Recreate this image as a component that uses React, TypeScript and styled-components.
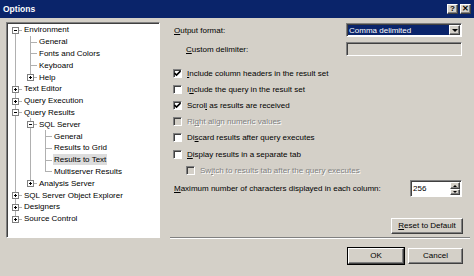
import React, {FC} from 'react';
import styled, {createGlobalStyle, css} from 'styled-components';

const colors = {
    face: '#d4d0c8',
    shadow: '#808080',
    darkShadow: '#404040',
    light: '#ffffff',
    navy: '#0a246a',
    line: '#b0b0b0',
    disabled: '#808080',
};

const GlobalStyle = createGlobalStyle`
  html, body {
    margin: 0;
    padding: 0;
    background: ${colors.face};
  }
  body {
    font-family: "Liberation Sans", Arial, sans-serif;
    font-size: 8px;
    color: #000;
  }
`;

const raised = css`
    border-style: solid;
    border-width: 1px;
    border-color: ${colors.light} ${colors.darkShadow} ${colors.darkShadow} ${colors.light};
    box-shadow: inset -1px -1px 0 ${colors.shadow};
`;

const sunken = css`
    border-style: solid;
    border-width: 1px;
    border-color: ${colors.shadow} ${colors.light} ${colors.light} ${colors.shadow};
    box-shadow: inset 1px 1px 0 ${colors.darkShadow};
`;

const Window = styled.div`
    width: 474px;
    height: 276px;
    display: flex;
    flex-direction: column;
    background: ${colors.face};
    overflow: hidden;
`;

const TitleBar = styled.div`
    height: 18px;
    flex: none;
    display: flex;
    align-items: center;
    justify-content: space-between;
    background: ${colors.navy};
    padding: 0 3px 0 3px;
`;

const Title = styled.span`
    color: #fff;
    font-weight: bold;
    font-size: 8.5px;
`;

const CaptionButtons = styled.div`
    display: flex;
    gap: 2px;
`;

const CaptionButton = styled.div`
    width: 11px;
    height: 10px;
    box-sizing: border-box;
    background: ${colors.face};
    ${raised};
    display: flex;
    align-items: center;
    justify-content: center;
    font-weight: bold;
    font-size: 8px;
    line-height: 1;
`;

const Body = styled.div`
    display: flex;
    padding: 4px 0 0 6px;
    gap: 10px;
`;

const TreeBox = styled.div`
    width: 154px;
    height: 216px;
    box-sizing: border-box;
    background: #fff;
    ${sunken};
    padding: 1px 0 0 1px;
    overflow: hidden;
`;

const TreeRow = styled.div`
    display: flex;
    align-items: center;
    height: 11.8px;
    white-space: nowrap;
`;

const Cell = styled.span<{ $top?: boolean; $bottom?: boolean; $stub?: boolean }>`
    position: relative;
    width: 15px;
    height: 100%;
    flex: none;
    &::before {
        content: '';
        position: absolute;
        left: 7px;
        width: 0;
        border-left: 1px solid ${colors.line};
        top: ${p => (p.$top ? '0' : '50%')};
        bottom: ${p => (p.$bottom ? '0' : '50%')};
        display: ${p => (p.$top || p.$bottom ? 'block' : 'none')};
    }
    &::after {
        content: '';
        position: absolute;
        left: 7px;
        right: 1px;
        top: 50%;
        border-top: 1px solid ${colors.line};
        display: ${p => (p.$stub ? 'block' : 'none')};
    }
`;

const Expander = styled.span`
    position: absolute;
    left: 4px;
    top: 50%;
    margin-top: -3px;
    width: 7px;
    height: 7px;
    box-sizing: border-box;
    border: 1px solid ${colors.shadow};
    background: #fff;
    z-index: 1;
`;

const ExpanderMark = styled.span<{ $plus?: boolean }>`
    position: absolute;
    left: 1px;
    top: 2px;
    width: 3px;
    height: 1px;
    background: #000;
    &::after {
        content: '';
        position: absolute;
        left: 1px;
        top: -1px;
        width: 1px;
        height: 3px;
        background: #000;
        display: ${p => (p.$plus ? 'block' : 'none')};
    }
`;

const NodeLabel = styled.span<{ $selected?: boolean }>`
    padding: 0 1px;
    line-height: 11px;
    background: ${p => (p.$selected ? '#dcdcdc' : 'transparent')};
`;

const RightPane = styled.div`
    width: 300px;
    display: flex;
    flex-direction: column;
`;

const FieldRow = styled.div<{ $indent?: number; $h?: number; $mt?: number }>`
    display: flex;
    align-items: center;
    justify-content: space-between;
    height: ${p => p.$h ?? 16}px;
    margin-top: ${p => p.$mt ?? 0}px;
    padding-left: ${p => p.$indent ?? 4}px;
    padding-right: 8px;
`;

const ComboBox = styled.div`
    width: 116px;
    height: 14px;
    box-sizing: border-box;
    ${sunken};
    background: #fff;
    display: flex;
    padding: 1px;
`;

const ComboValue = styled.div`
    flex: 1;
    background: ${colors.navy};
    color: #fff;
    padding-left: 1px;
    display: flex;
    align-items: center;
`;

const ComboArrow = styled.div`
    width: 11px;
    box-sizing: border-box;
    background: ${colors.face};
    ${raised};
    display: flex;
    align-items: center;
    justify-content: center;
    &::after {
        content: '';
        border-left: 3px solid transparent;
        border-right: 3px solid transparent;
        border-top: 3px solid #000;
    }
`;

const TextBox = styled.div<{ $disabled?: boolean }>`
    width: 116px;
    height: 14px;
    box-sizing: border-box;
    ${sunken};
    background: ${p => (p.$disabled ? colors.face : '#fff')};
`;

const CheckRowWrap = styled.div<{ $indent?: number }>`
    display: flex;
    align-items: center;
    gap: 5px;
    height: 16.2px;
    padding-left: ${p => p.$indent ?? 3}px;
`;

const Box = styled.span<{ $disabled?: boolean }>`
    width: 9px;
    height: 9px;
    box-sizing: border-box;
    ${sunken};
    background: ${p => (p.$disabled ? colors.face : '#fff')};
    display: flex;
    align-items: center;
    justify-content: center;
    flex: none;
`;

const Label = styled.span<{ $disabled?: boolean }>`
    white-space: nowrap;
    color: ${p => (p.$disabled ? colors.disabled : '#000')};
    text-shadow: ${p => (p.$disabled ? '1px 1px 0 #fff' : 'none')};
`;

const SpinBox = styled.div`
    width: 52px;
    height: 17px;
    box-sizing: border-box;
    ${sunken};
    background: #fff;
    display: flex;
    align-items: center;
    padding: 1px 1px 1px 2px;
`;

const SpinValue = styled.span`
    flex: 1;
`;

const SpinButtons = styled.div`
    width: 10px;
    height: 100%;
    display: flex;
    flex-direction: column;
`;

const SpinButton = styled.div<{ $up?: boolean }>`
    flex: 1;
    background: ${colors.face};
    ${raised};
    box-sizing: border-box;
    display: flex;
    align-items: center;
    justify-content: center;
    &::after {
        content: '';
        border-left: 2px solid transparent;
        border-right: 2px solid transparent;
        ${p => (p.$up ? 'border-bottom: 2px solid #000;' : 'border-top: 2px solid #000;')}
    }
`;

const ButtonRow = styled.div<{ $mt: number }>`
    display: flex;
    justify-content: flex-end;
    gap: 4px;
    margin-top: ${p => p.$mt}px;
    padding-right: 7px;
`;

const Button = styled.div<{ $w: number; $default?: boolean }>`
    width: ${p => p.$w}px;
    height: 16px;
    box-sizing: border-box;
    background: ${colors.face};
    display: flex;
    align-items: center;
    justify-content: center;
    ${raised};
    ${p => p.$default && css`
        outline: 1px solid #000;
        outline-offset: 0;
    `}
`;

const Separator = styled.div`
    height: 0;
    margin-top: 3px;
    border-top: 1px solid ${colors.shadow};
    border-bottom: 1px solid ${colors.light};
`;

type Node = { level: number; label: string; box?: 'plus' | 'minus'; selected?: boolean };

const tree: Node[] = [
    {level: 0, label: 'Environment', box: 'minus'},
    {level: 1, label: 'General'},
    {level: 1, label: 'Fonts and Colors'},
    {level: 1, label: 'Keyboard'},
    {level: 1, label: 'Help', box: 'plus'},
    {level: 0, label: 'Text Editor', box: 'plus'},
    {level: 0, label: 'Query Execution', box: 'plus'},
    {level: 0, label: 'Query Results', box: 'minus'},
    {level: 1, label: 'SQL Server', box: 'minus'},
    {level: 2, label: 'General'},
    {level: 2, label: 'Results to Grid'},
    {level: 2, label: 'Results to Text', selected: true},
    {level: 2, label: 'Multiserver Results'},
    {level: 1, label: 'Analysis Server', box: 'plus'},
    {level: 0, label: 'SQL Server Object Explorer', box: 'plus'},
    {level: 0, label: 'Designers', box: 'plus'},
    {level: 0, label: 'Source Control', box: 'plus'},
];

// does the branch at column `col` continue below row `i`?
const continues = (i: number, col: number) => {
    for (let j = i + 1; j < tree.length; j++) {
        if (tree[j].level < col) return false;
        if (tree[j].level === col) return true;
    }
    return false;
};

const Tree: FC = () => (
    <TreeBox>
        {tree.map((node, i) => (
            <TreeRow key={i}>
                {Array.from({length: node.level + 1}).map((_, c) => {
                    const own = c === node.level;
                    const down = continues(i, c);
                    return (
                        <Cell
                            key={c}
                            $top={own ? i > 0 : down}
                            $bottom={down}
                            $stub={own}
                        >
                            {own && node.box && (
                                <Expander>
                                    <ExpanderMark $plus={node.box === 'plus'}/>
                                </Expander>
                            )}
                        </Cell>
                    );
                })}
                <NodeLabel $selected={node.selected}>{node.label}</NodeLabel>
            </TreeRow>
        ))}
    </TreeBox>
);

// text with one underlined access key
const Mn: FC<{ text: string; at: number }> = ({text, at}) => (
    <>
        {text.slice(0, at)}
        <u>{text[at]}</u>
        {text.slice(at + 1)}
    </>
);

const Tick: FC = () => (
    <svg width="7" height="7" viewBox="0 0 7 7">
        <path d="M0.5 3 L2.5 5 L6.5 1" stroke="#000" strokeWidth="1.6" fill="none"/>
    </svg>
);

const CheckRow: FC<{ checked?: boolean; disabled?: boolean; indent?: number; text: string; at: number }> =
    ({checked, disabled, indent, text, at}) => (
        <CheckRowWrap $indent={indent}>
            <Box $disabled={disabled}>{checked && <Tick/>}</Box>
            <Label $disabled={disabled}><Mn text={text} at={at}/></Label>
        </CheckRowWrap>
    );

const App: FC = () => (
    <Window>
        <GlobalStyle/>
        <TitleBar>
            <Title>Options</Title>
            <CaptionButtons>
                <CaptionButton>?</CaptionButton>
                <CaptionButton>✕</CaptionButton>
            </CaptionButtons>
        </TitleBar>
        <Body>
            <Tree/>
            <RightPane>
                <FieldRow>
                    <Label><Mn text="Output format:" at={0}/></Label>
                    <ComboBox>
                        <ComboValue>Comma delimited</ComboValue>
                        <ComboArrow/>
                    </ComboBox>
                </FieldRow>
                <FieldRow $indent={16} $mt={3}>
                    <Label><Mn text="Custom delimiter:" at={0}/></Label>
                    <TextBox $disabled/>
                </FieldRow>
                <div style={{height: 8}}/>
                <CheckRow checked text="Include column headers in the result set" at={0}/>
                <CheckRow text="Include the query in the result set" at={1}/>
                <CheckRow checked text="Scroll as results are received" at={5}/>
                <CheckRow disabled text="Right align numeric values" at={2}/>
                <CheckRow text="Discard results after query executes" at={2}/>
                <CheckRow text="Display results in a separate tab" at={0}/>
                <CheckRow disabled indent={16} text="Switch to results tab after the query executes" at={2}/>
                <FieldRow $h={18} $mt={1.5}>
                    <Label><Mn text="Maximum number of characters displayed in each column:" at={0}/></Label>
                    <SpinBox>
                        <SpinValue>256</SpinValue>
                        <SpinButtons>
                            <SpinButton $up/>
                            <SpinButton/>
                        </SpinButtons>
                    </SpinBox>
                </FieldRow>
                <ButtonRow $mt={20}>
                    <Button $w={72}><Mn text="Reset to Default" at={0}/></Button>
                </ButtonRow>
                <Separator/>
                <ButtonRow $mt={9}>
                    <Button $w={56} $default>OK</Button>
                    <Button $w={55}>Cancel</Button>
                </ButtonRow>
            </RightPane>
        </Body>
    </Window>
);

export default App;
